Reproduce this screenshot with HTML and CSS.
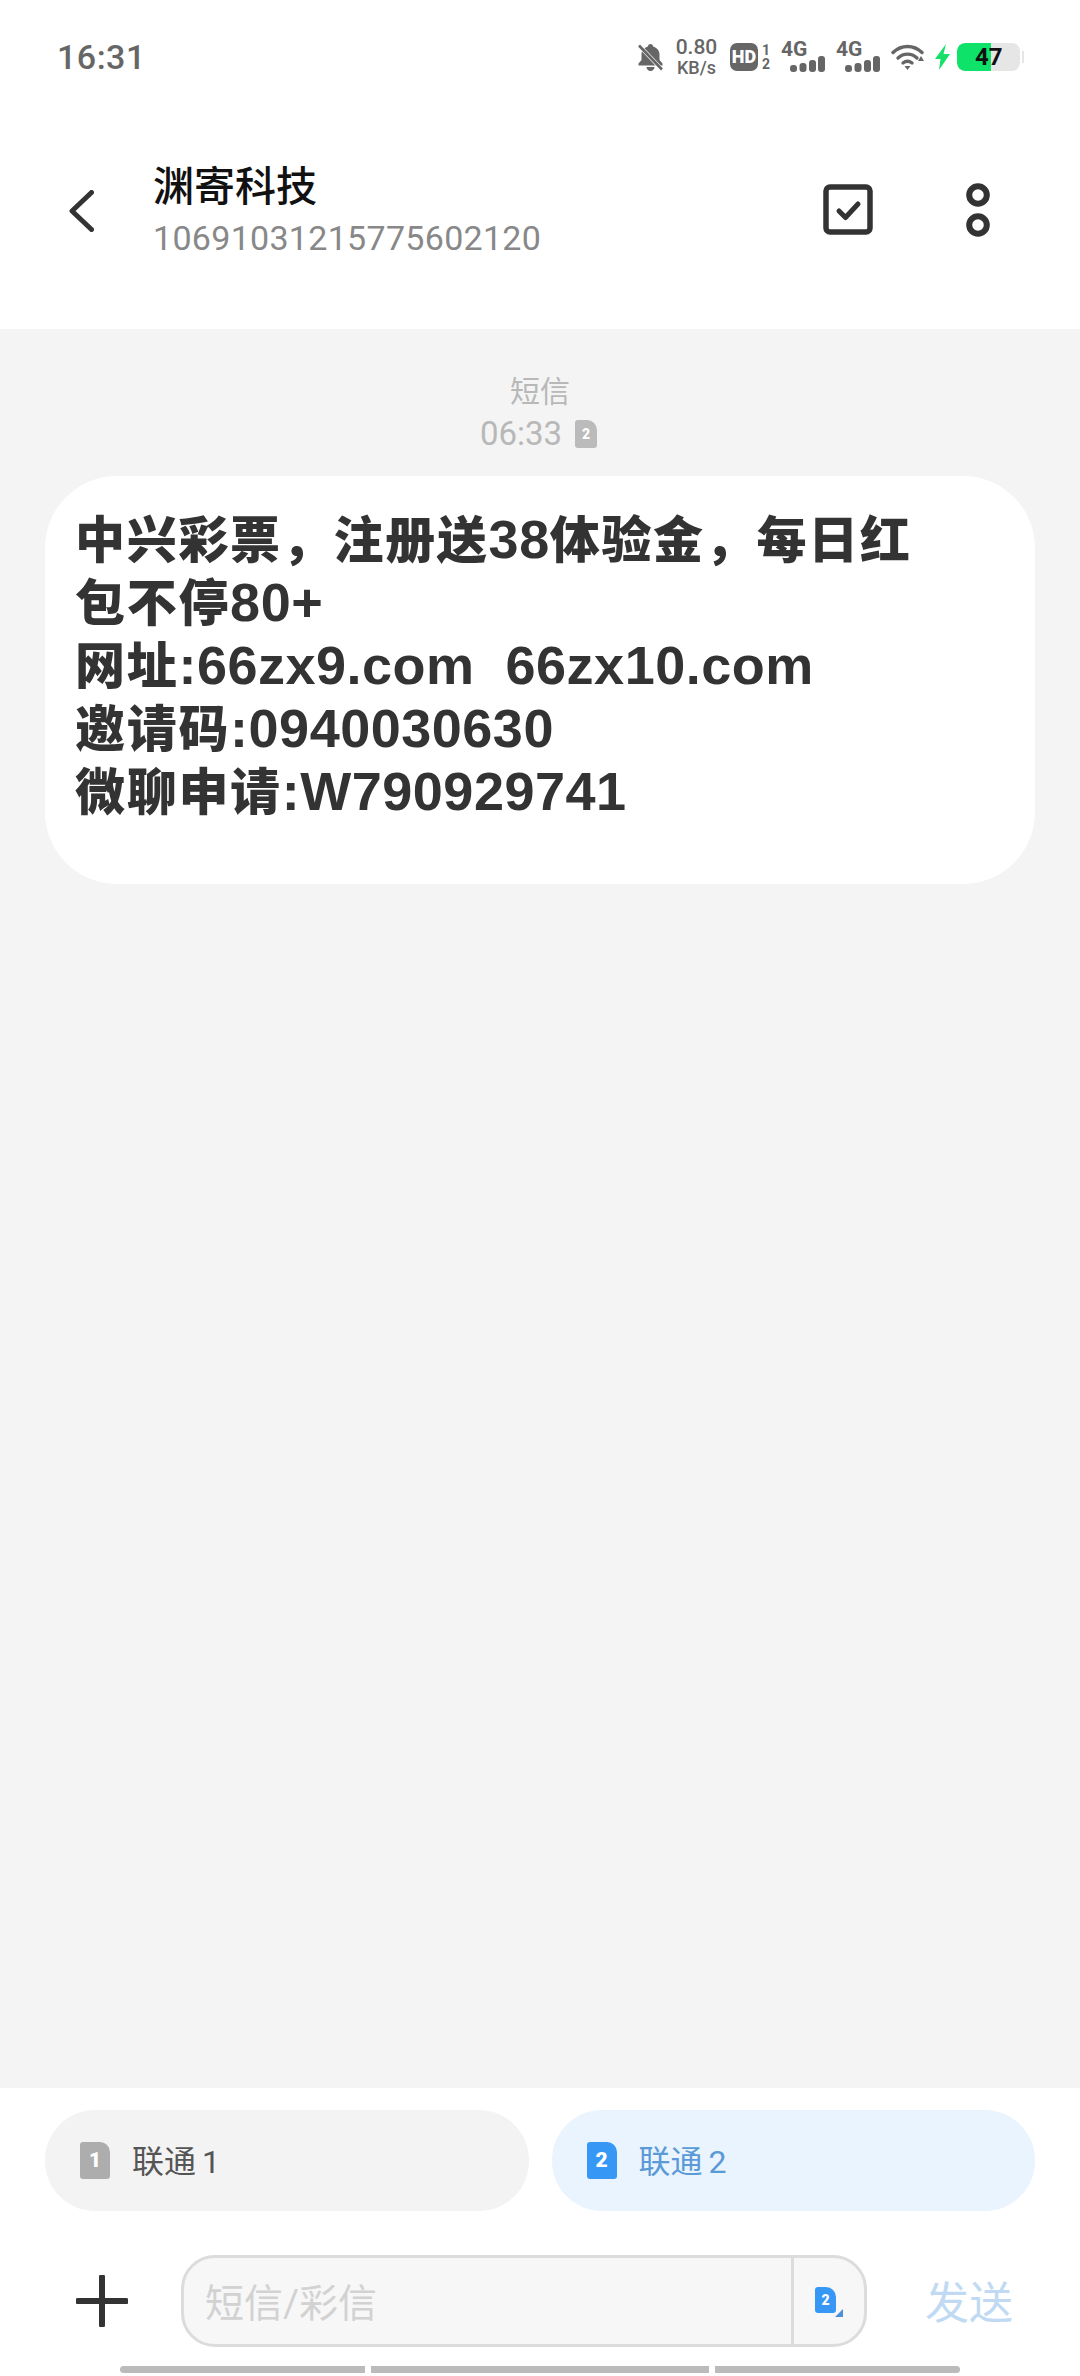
FILE: index.html
```html
<!DOCTYPE html>
<html lang="zh-CN">
<head>
    <meta charset="UTF-8">
    <meta name="viewport" content="width=device-width, initial-scale=1.0">
    <title>渊寄科技</title>
    <link rel="stylesheet" href="styles.css">
</head>
<body>
<div class="page">
    <div class="status-bar">
        <span class="clock">16:31</span>
        <div class="status-icons">
            <svg class="ic-bell" viewBox="0 0 25 27" width="25" height="27">
                <path d="M12.500 0c1.500 0 2.500 1 2.600 2.400 3.800 1 6.400 4.200 6.400 8.100v5.500l3 3.500v2H.5v-2l3-3.500v-5.500c0-3.900 2.600-7.100 6.400-8.100C10 1 11 0 12.500 0zM8.500 23h8c0 2.200-1.700 4-4 4s-4-1.800-4-4z" fill="#666"/>
                <path d="M1 1.500L24 25.500" stroke="#fff" stroke-width="4"/>
                <path d="M1 1.500L24 25.500" stroke="#666" stroke-width="2.600"/>
            </svg>
            <div class="speed"><span class="speed-num">0.80</span><span class="speed-unit">KB/s</span></div>
            <div class="hd">
                <span class="hd-box">HD</span>
                <div class="hd-nums"><span>1</span><span>2</span></div>
            </div>
            <div class="signal">
                <span class="signal-label">4G</span>
                <svg class="signal-bars" viewBox="0 0 35 16" width="35" height="16">
                    <rect x="0" y="9" width="7" height="7" rx="3" fill="#666"/>
                    <rect x="9.500" y="7" width="7" height="9" rx="3" fill="#666"/>
                    <rect x="19" y="4" width="7" height="12" rx="3" fill="#666"/>
                    <rect x="28" y="0" width="7" height="16" rx="3" fill="#666"/>
                </svg>
            </div>
            <div class="signal">
                <span class="signal-label">4G</span>
                <svg class="signal-bars" viewBox="0 0 35 16" width="35" height="16">
                    <rect x="0" y="9" width="7" height="7" rx="3" fill="#666"/>
                    <rect x="9.500" y="7" width="7" height="9" rx="3" fill="#666"/>
                    <rect x="19" y="4" width="7" height="12" rx="3" fill="#666"/>
                    <rect x="28" y="0" width="7" height="16" rx="3" fill="#666"/>
                </svg>
            </div>
            <svg class="ic-wifi" viewBox="0 0 33 26" width="33" height="26">
                <path d="M2 8.500C10.500 .5 22.500 .5 31 8.500" fill="none" stroke="#666" stroke-width="3.400" stroke-linecap="round"/>
                <path d="M7 14C12.500 8.800 20.500 8.800 26 14" fill="none" stroke="#666" stroke-width="3.400" stroke-linecap="round"/>
                <path d="M12 19C14.700 16.800 18.300 16.800 21 19" fill="none" stroke="#666" stroke-width="3.400" stroke-linecap="round"/>
                <path d="M13.500 22h6l-3 4z" fill="#666"/>
                <path d="M27 17h6l-3-5z" fill="#666"/>
            </svg>
            <svg class="ic-bolt" viewBox="0 0 15 26" width="15" height="26">
                <path d="M11 0L0 15h5.500L4 26 15 10H8.500z" fill="#16e069"/>
            </svg>
            <div class="battery">
                <div class="battery-body">
                    <div class="battery-fill"></div>
                    <span class="battery-num">47</span>
                </div>
                <div class="battery-nub"></div>
            </div>
        </div>
    </div>

    <header class="top-bar">
        <svg class="ic-back" viewBox="0 0 25 42" width="25" height="42">
            <path d="M22.500 2.500L3 21l19.500 18.500" fill="none" stroke="#333" stroke-width="5" stroke-linecap="round" stroke-linejoin="round"/>
        </svg>
        <div class="contact">
            <div class="contact-name">渊寄科技</div>
            <div class="contact-num">10691031215775602120</div>
        </div>
        <svg class="ic-select" viewBox="0 0 50 51" width="50" height="51">
            <rect x="3" y="3" width="44" height="45" rx="4" fill="none" stroke="#333" stroke-width="5.500"/>
            <path d="M16 27l6.500 6.500L35 20" fill="none" stroke="#333" stroke-width="5" stroke-linecap="round" stroke-linejoin="round"/>
        </svg>
        <svg class="ic-more" viewBox="0 0 24 54" width="24" height="54">
            <circle cx="12" cy="12" r="8.800" fill="none" stroke="#333" stroke-width="6"/>
            <circle cx="12" cy="42" r="8.800" fill="none" stroke="#333" stroke-width="6"/>
        </svg>
    </header>

    <main class="thread">
        <div class="msg-type">短信</div>
        <div class="msg-time">
            <span>06:33</span>
            <span class="sim sim-small sim-gray">2</span>
        </div>
        <div class="bubble">中兴彩票，注册送<span class="latin">38</span>体验金，每日红<br>包不停<span class="latin">80+</span><br>网址<span class="latin">:66zx9.com&nbsp; 66zx10.com</span><br>邀请码<span class="latin">:0940030630</span><br>微聊申请<span class="latin">:W790929741</span></div>
    </main>

    <footer class="composer">
        <div class="sim-row">
            <div class="sim-pill">
                <span class="sim sim-gray">1</span>
                <span class="sim-name">联通 1</span>
            </div>
            <div class="sim-pill sim-pill-on">
                <span class="sim sim-blue">2</span>
                <span class="sim-name">联通 2</span>
            </div>
        </div>
        <div class="input-row">
            <svg class="ic-plus" viewBox="0 0 52 52" width="52" height="52">
                <path d="M26 2v48M2 26h48" stroke="#333" stroke-width="6" stroke-linecap="round"/>
            </svg>
            <div class="input-box">
                <span class="placeholder">短信/彩信</span>
                <div class="input-sim">
                    <span class="sim sim-tiny sim-blue">2</span>
                    <span class="corner"></span>
                </div>
            </div>
            <span class="send">发送</span>
        </div>
        <div class="home-bar">
            <span class="seg seg-a"></span>
            <span class="seg seg-b"></span>
            <span class="seg seg-c"></span>
        </div>
    </footer>
</div>
</body>
</html>
```
FILE: styles.css
```css
* {
    box-sizing: border-box;
}
body {
    margin: 0;
    font-family: Roboto, "Noto Sans CJK SC", sans-serif;
    color: #333;
    background-color: #fff;
}
.page {
    width: 1080px;
    height: 2376px;
    display: flex;
    flex-direction: column;
    overflow: hidden;
}

/* status bar */
.status-bar {
    height: 76px;
    padding: 38px 56px 0 57px;
    display: flex;
    justify-content: space-between;
    align-items: center;
}
.clock {
    font-size: 34px;
    font-weight: 500;
    color: #666;
    letter-spacing: 0.5px;
}
.status-icons {
    display: flex;
    align-items: center;
    gap: 11px;
}
.speed {
    width: 45px;
    display: flex;
    flex-direction: column;
    align-items: center;
    color: #666;
    font-weight: 500;
    line-height: 17px;
}
.speed-num {
    font-size: 21px;
}
.speed-unit {
    font-size: 18px;
    margin-top: 3px;
}
.hd {
    display: flex;
    align-items: center;
    gap: 4px;
}
.hd-box {
    width: 28px;
    height: 28px;
    border-radius: 7px;
    background-color: #666;
    color: #fff;
    font-size: 18px;
    font-weight: 900;
    line-height: 28px;
    text-align: center;
}
.hd-nums {
    display: flex;
    flex-direction: column;
    font-size: 14px;
    font-weight: 700;
    line-height: 14px;
    color: #666;
}
.signal {
    display: flex;
    flex-direction: column;
    width: 44px;
}
.signal-label {
    font-size: 21px;
    font-weight: 700;
    line-height: 14px;
    color: #666;
}
.signal-bars {
    margin-left: 9px;
    display: block;
}
.battery {
    display: flex;
    align-items: center;
    gap: 2px;
    margin-left: -4px;
}
.battery-body {
    position: relative;
    width: 63px;
    height: 28px;
    border-radius: 8px;
    background-color: #e6e6e6;
    overflow: hidden;
}
.battery-fill {
    width: 34px;
    height: 100%;
    border-radius: 8px 0 0 8px;
    background-color: #0fe268;
}
.battery-num {
    position: absolute;
    top: 0;
    left: 18px;
    font-size: 24px;
    font-weight: 700;
    line-height: 28px;
    color: #111;
}
.battery-nub {
    width: 2px;
    height: 12px;
    background-color: #e6e6e6;
}

/* top bar */
.top-bar {
    height: 253px;
    padding: 14px 90px 0 69px;
    display: flex;
    align-items: center;
    background-color: #fff;
}
.ic-back {
    margin-top: 3px;
}
.contact {
    flex: 1;
    margin-left: 59px;
    margin-top: 4px;
}
.contact-name {
    font-size: 41px;
    font-weight: 500;
    color: #111;
    line-height: 52px;
}
.contact-num {
    font-size: 34px;
    letter-spacing: 0.3px;
    color: #888;
    line-height: 50px;
}
.ic-more {
    margin-left: 93px;
}

/* thread */
.thread {
    flex: 1;
    padding: 43px 45px 0;
    display: flex;
    flex-direction: column;
    align-items: center;
    background-color: #f4f4f4;
}
.msg-type {
    font-size: 30px;
    line-height: 40px;
    color: #b8b8b8;
}
.msg-time {
    display: flex;
    align-items: center;
    gap: 13px;
    margin-right: 3px;
    font-size: 33px;
    line-height: 44px;
    color: #b8b8b8;
}
.bubble {
    width: 100%;
    height: 408px;
    margin-top: 20px;
    padding: 34px 60px 0 30px;
    border-radius: 72px;
    background-color: #fff;
    font-size: 50px;
    font-weight: 900;
    line-height: 63px;
    letter-spacing: 1.700px;
    color: #333;
}
.latin {
    font-family: "Liberation Sans", Arial, sans-serif;
    font-size: 54px;
    font-weight: 700;
    line-height: 1;
    letter-spacing: 0.5px;
}

/* sim icons */
.sim {
    width: 30px;
    height: 37px;
    display: inline-block;
    border-radius: 3px 10px 3px 3px;
    color: #fff;
    font-size: 21px;
    font-weight: 900;
    line-height: 37px;
    text-align: center;
}
.sim-gray {
    background-color: #adadad;
}
.sim-blue {
    background-color: #3797f5;
}
.sim-small {
    width: 22px;
    height: 28px;
    font-size: 14px;
    line-height: 28px;
    background-color: #bbb;
}
.sim-tiny {
    width: 21px;
    height: 26px;
    font-size: 14px;
    line-height: 26px;
}

/* bottom */
.composer {
    height: 288px;
    padding-top: 22px;
    display: flex;
    flex-direction: column;
    background-color: #fff;
}
.sim-row {
    display: flex;
    gap: 23px;
    padding: 0 45px;
}
.sim-pill {
    flex: 1;
    height: 101px;
    padding-left: 35px;
    display: flex;
    align-items: center;
    gap: 22px;
    border-radius: 50px;
    background-color: #f3f3f3;
}
.sim-pill-on {
    background-color: #e9f4fe;
}
.sim-name {
    margin-top: -3px;
    font-size: 32px;
    word-spacing: -2px;
    color: #555;
}
.sim-pill-on .sim-name {
    color: #5b9ad6;
}
.input-row {
    margin-top: 44px;
    padding-left: 76px;
    display: flex;
    align-items: center;
}
.input-box {
    width: 686px;
    height: 92px;
    margin-left: 53px;
    display: flex;
    align-items: center;
    border: 3px solid #dcdcdc;
    border-radius: 34px;
    background-color: #f7f7f7;
}
.placeholder {
    flex: 1;
    margin-top: -2px;
    padding-left: 21px;
    font-size: 39px;
    color: #d2d2d2;
}
.input-sim {
    position: relative;
    width: 73px;
    height: 100%;
    padding: 29px 0 0 21px;
    border-left: 3px solid #dcdcdc;
}
.input-sim .sim {
    display: block;
}
.corner {
    position: absolute;
    left: 41px;
    top: 51px;
    width: 0;
    height: 0;
    border-left: 8px solid transparent;
    border-bottom: 8px solid #4f8fd6;
}
.send {
    margin-top: -2px;
    margin-left: 58px;
    font-size: 44px;
    color: #c0daf3;
}
.home-bar {
    margin-top: 19px;
    padding-left: 120px;
    display: flex;
    gap: 6px;
}
.seg {
    height: 7px;
    background-color: #bbb;
}
.seg-a {
    width: 245px;
    border-radius: 4px 0 0 4px;
}
.seg-b {
    width: 338px;
}
.seg-c {
    width: 245px;
    border-radius: 0 4px 4px 0;
}
```
